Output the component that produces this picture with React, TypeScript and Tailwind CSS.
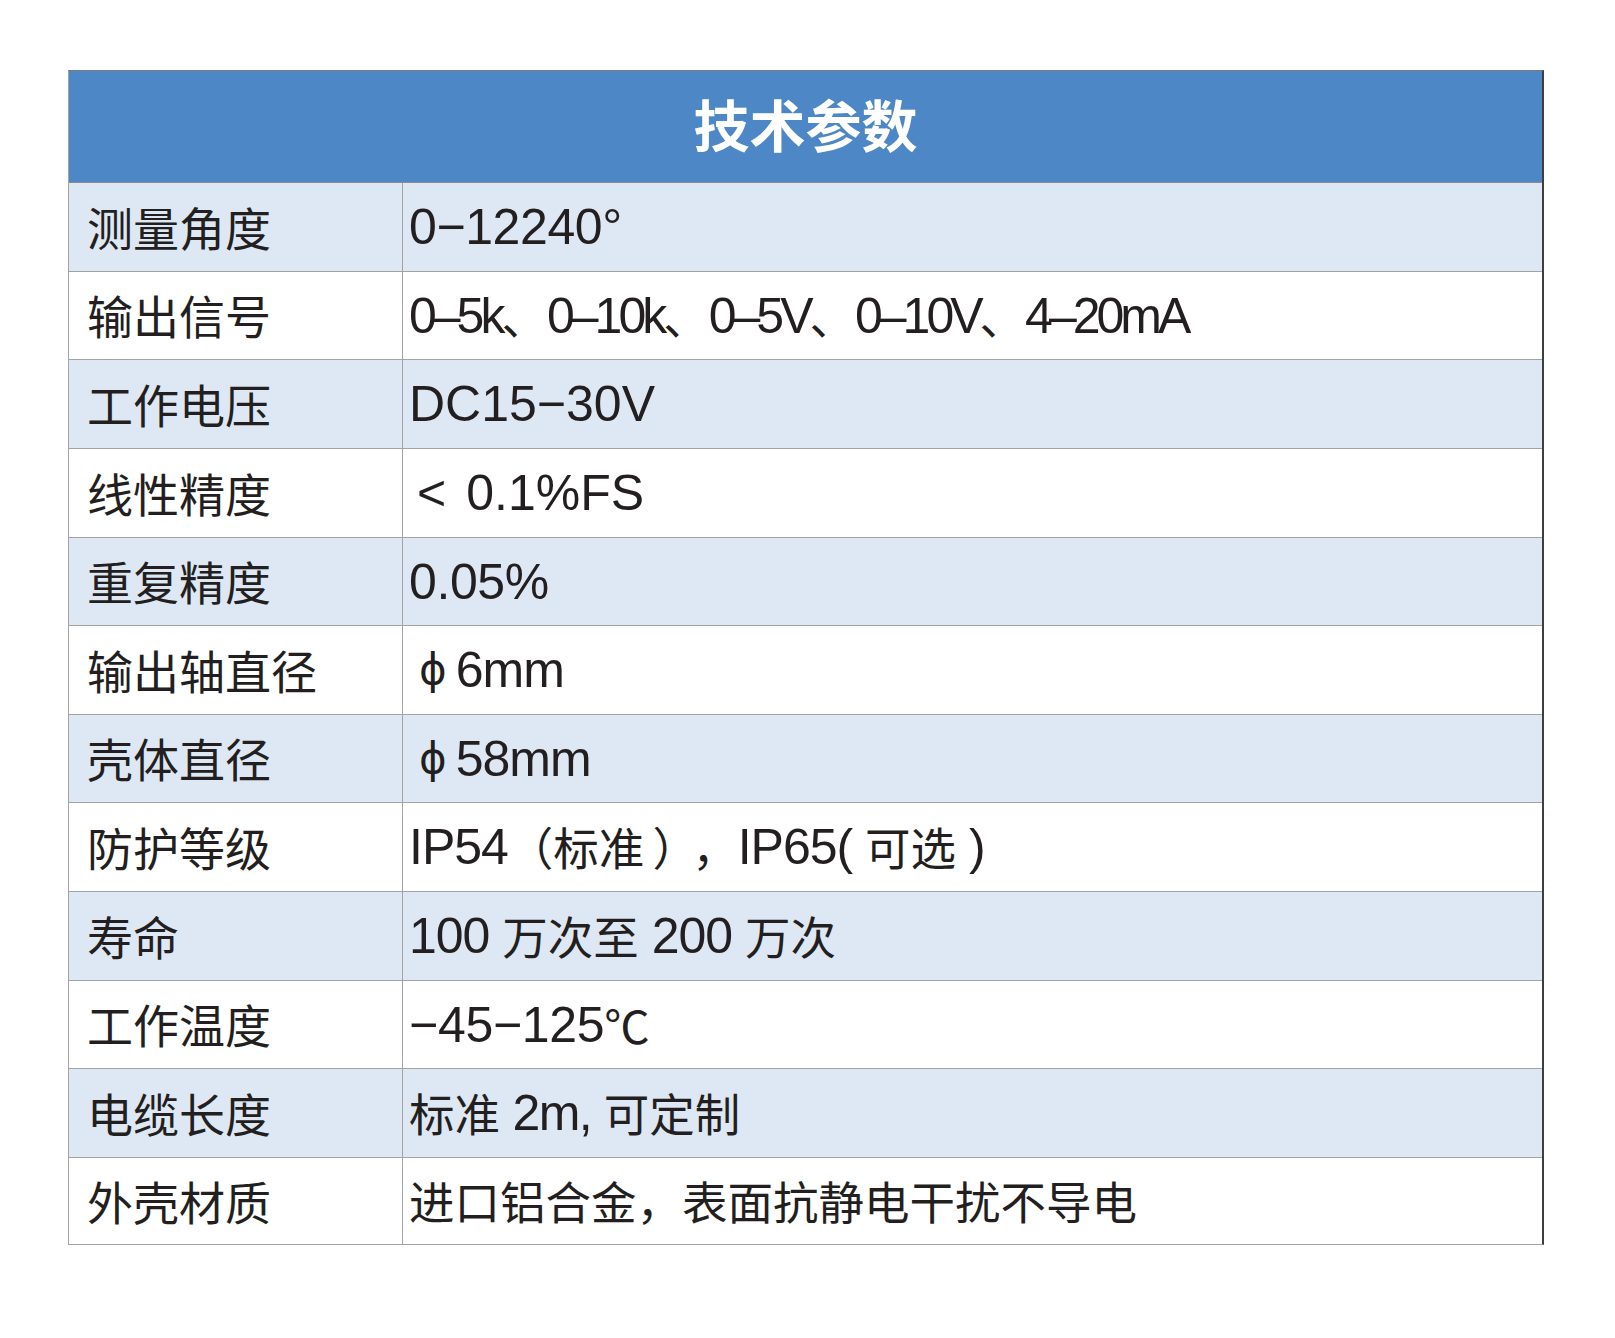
import type { ReactNode } from 'react';

const CJK_RUN = /([\u2103\u3000-\u303f\u4e00-\u9fff\uff00-\uffef]+)/;

function Cjk({ children, className = '' }: { children: ReactNode; className?: string }) {
  return <span className={`font-['Noto_Sans_CJK_SC',sans-serif] text-[45.5px] tracking-normal ${className}`}>{children}</span>;
}

// Latin runs are set a little larger than the CJK runs, as in the printed sheet
function Mixed({ text }: { text: string }) {
  return (
    <>
      {text.split(CJK_RUN).map((part, i) =>
        i % 2 === 1 ? <Cjk key={i}>{part}</Cjk> : <span key={i}>{part}</span>
      )}
    </>
  );
}

function Phi({ size }: { size: string }) {
  return (
    <>
      <span className="ml-[10px] mr-[10px] font-['DejaVu_Sans',sans-serif] text-[42px]">ϕ</span>
      <span>{size}</span>
    </>
  );
}

const rows: { label: string; value: ReactNode; track: string; h: string }[] = [
  { label: '测量角度', value: <Mixed text="0−12240°" />, track: 'tracking-[-0.4px]', h: 'h-[89px]' },
  { label: '输出信号', value: <Mixed text="0–5k、0–10k、0–5V、0–10V、4–20mA" />, track: 'tracking-[-4px]', h: 'h-[88px]' },
  { label: '工作电压', value: <Mixed text="DC15−30V" />, track: 'tracking-normal', h: 'h-[89px]' },
  {
    label: '线性精度',
    value: <><span className="ml-[8px]">&lt;</span><span className="ml-[20px]">0.1%FS</span></>,
    track: 'tracking-normal',
    h: 'h-[89px]',
  },
  { label: '重复精度', value: <Mixed text="0.05%" />, track: 'tracking-[-0.4px]', h: 'h-[88px]' },
  { label: '输出轴直径', value: <Phi size="6mm" />, track: 'tracking-[-1px]', h: 'h-[89px]' },
  { label: '壳体直径', value: <Phi size="58mm" />, track: 'tracking-[-1px]', h: 'h-[88px]' },
  {
    label: '防护等级',
    value: (
      <>
        <span>IP54</span>
        <Cjk>（标准</Cjk>
        <Cjk className="ml-[8px] [font-feature-settings:'halt']">）</Cjk>
        <Cjk className="ml-[17px]">，</Cjk>
        <span>IP65( </span>
        <Cjk>可选</Cjk>
        <span> )</span>
      </>
    ),
    track: 'tracking-[-1px]',
    h: 'h-[89px]',
  },
  { label: '寿命', value: <Mixed text="100 万次至 200 万次" />, track: 'tracking-[-1px]', h: 'h-[89px]' },
  { label: '工作温度', value: <Mixed text="−45−125℃" />, track: 'tracking-[-0.3px]', h: 'h-[88px]' },
  { label: '电缆长度', value: <Mixed text="标准 2m, 可定制" />, track: 'tracking-[-1.5px]', h: 'h-[89px]' },
  { label: '外壳材质', value: <Mixed text="进口铝合金，表面抗静电干扰不导电" />, track: 'tracking-[-1px]', h: 'h-[86px]' },
];

export default function App() {
  return (
    <div className="min-h-screen bg-white pt-[70px] pl-[68px] text-[#231f20]">
      <div className="w-[1476px] border border-[#a3a3a3] border-r-2 border-r-[#3f3f3f] border-t-[#7a7a7a]">
        {/* Title bar */}
        <div className="h-[112px] bg-[#4d87c5] border-b border-[#8c8c8c] flex items-center justify-center pb-[8px]">
          <span className="font-['Noto_Sans_CJK_SC',sans-serif] font-bold text-[56px] leading-none text-white">技术参数</span>
        </div>

        {rows.map((r, i) => (
          <div
            key={r.label}
            className={`flex ${r.h} ${i % 2 === 0 ? 'bg-[#dee8f4]' : 'bg-white'} ${i === rows.length - 1 ? '' : 'border-b border-[#a3a3a3]'}`}
          >
            <div className="w-[334px] shrink-0 border-r border-[#a3a3a3] flex items-center pl-[18px] pb-[3px] font-['Noto_Sans_CJK_SC',sans-serif] text-[46px] leading-none">
              {r.label}
            </div>
            <div
              className={`flex-1 flex items-center pl-[6px] font-['Liberation_Sans','Noto_Sans_CJK_SC',sans-serif] text-[50px] leading-none whitespace-pre ${r.track}`}
            >
              {r.value}
            </div>
          </div>
        ))}
      </div>
    </div>
  );
}
